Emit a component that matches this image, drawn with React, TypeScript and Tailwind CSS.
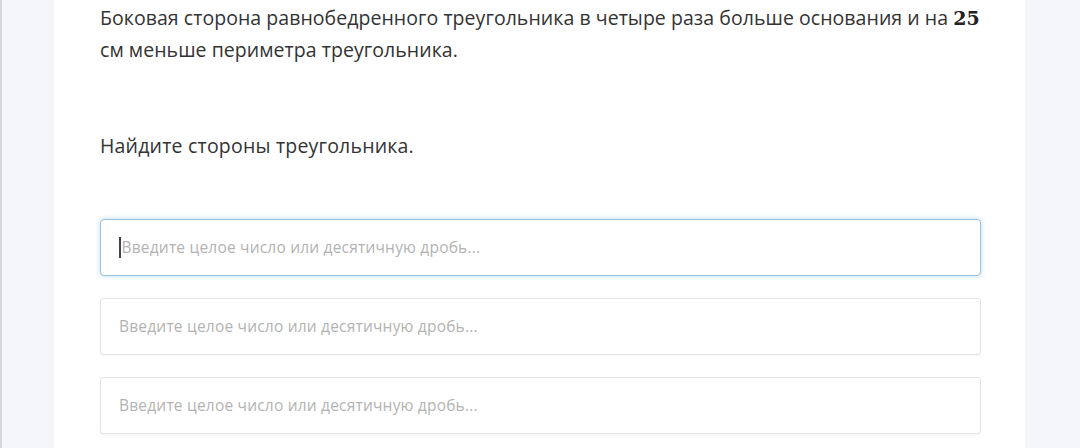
import React from "react";

function Field({ focused }: { focused?: boolean }) {
  return (
    <div
      className={
        focused
          ? "h-[57px] rounded-[4px] border border-[#98c2de] bg-white shadow-[0_0_5px_rgba(120,180,220,0.5)] flex items-center pl-[18px]"
          : "h-[57px] rounded-[3px] border border-[#e4e4e4] bg-white shadow-[0_1px_2px_rgba(0,0,0,0.04)] flex items-center pl-[18px]"
      }
    >
      {focused && <span className="w-[1.5px] h-[21px] bg-[#444] mr-[1px]" />}
      <span className="text-[15.5px] text-[#b3b3b3] tracking-[0.2px]" style={{ fontFamily: '"Open Sans", sans-serif' }}>
        Введите целое число или десятичную дробь...
      </span>
    </div>
  );
}

export default function App() {
  return (
    <div className="flex h-[448px] w-[1080px] overflow-hidden bg-white" style={{ fontFamily: '"Open Sans", sans-serif' }}>
      <div className="w-[54px] shrink-0 bg-[#f5f6fa] border-l-[2px] border-[#d4d6de]" />
      <div className="flex-1 bg-white pl-[46px] pr-[20px] pt-[2px]">
        <p className="text-[19.5px] leading-[32px] text-[#333333] tracking-[0.05px]">
          Боковая сторона равнобедренного треугольника в четыре раза больше основания и на{" "}
          <span className="font-bold text-[19px] text-[#222]" style={{ fontFamily: '"DejaVu Serif", serif' }}>25</span> см меньше периметра треугольника.
        </p>
        <p className="mt-[64px] text-[19.5px] leading-[32px] text-[#333333] tracking-[0.2px]">Найдите стороны треугольника.</p>
        <div className="mt-[57px] flex flex-col gap-[22px] mr-[24px]">
          <Field focused />
          <Field />
          <Field />
        </div>
      </div>
      <div className="w-[55px] shrink-0 bg-[#f5f6fa]" />
    </div>
  );
}
